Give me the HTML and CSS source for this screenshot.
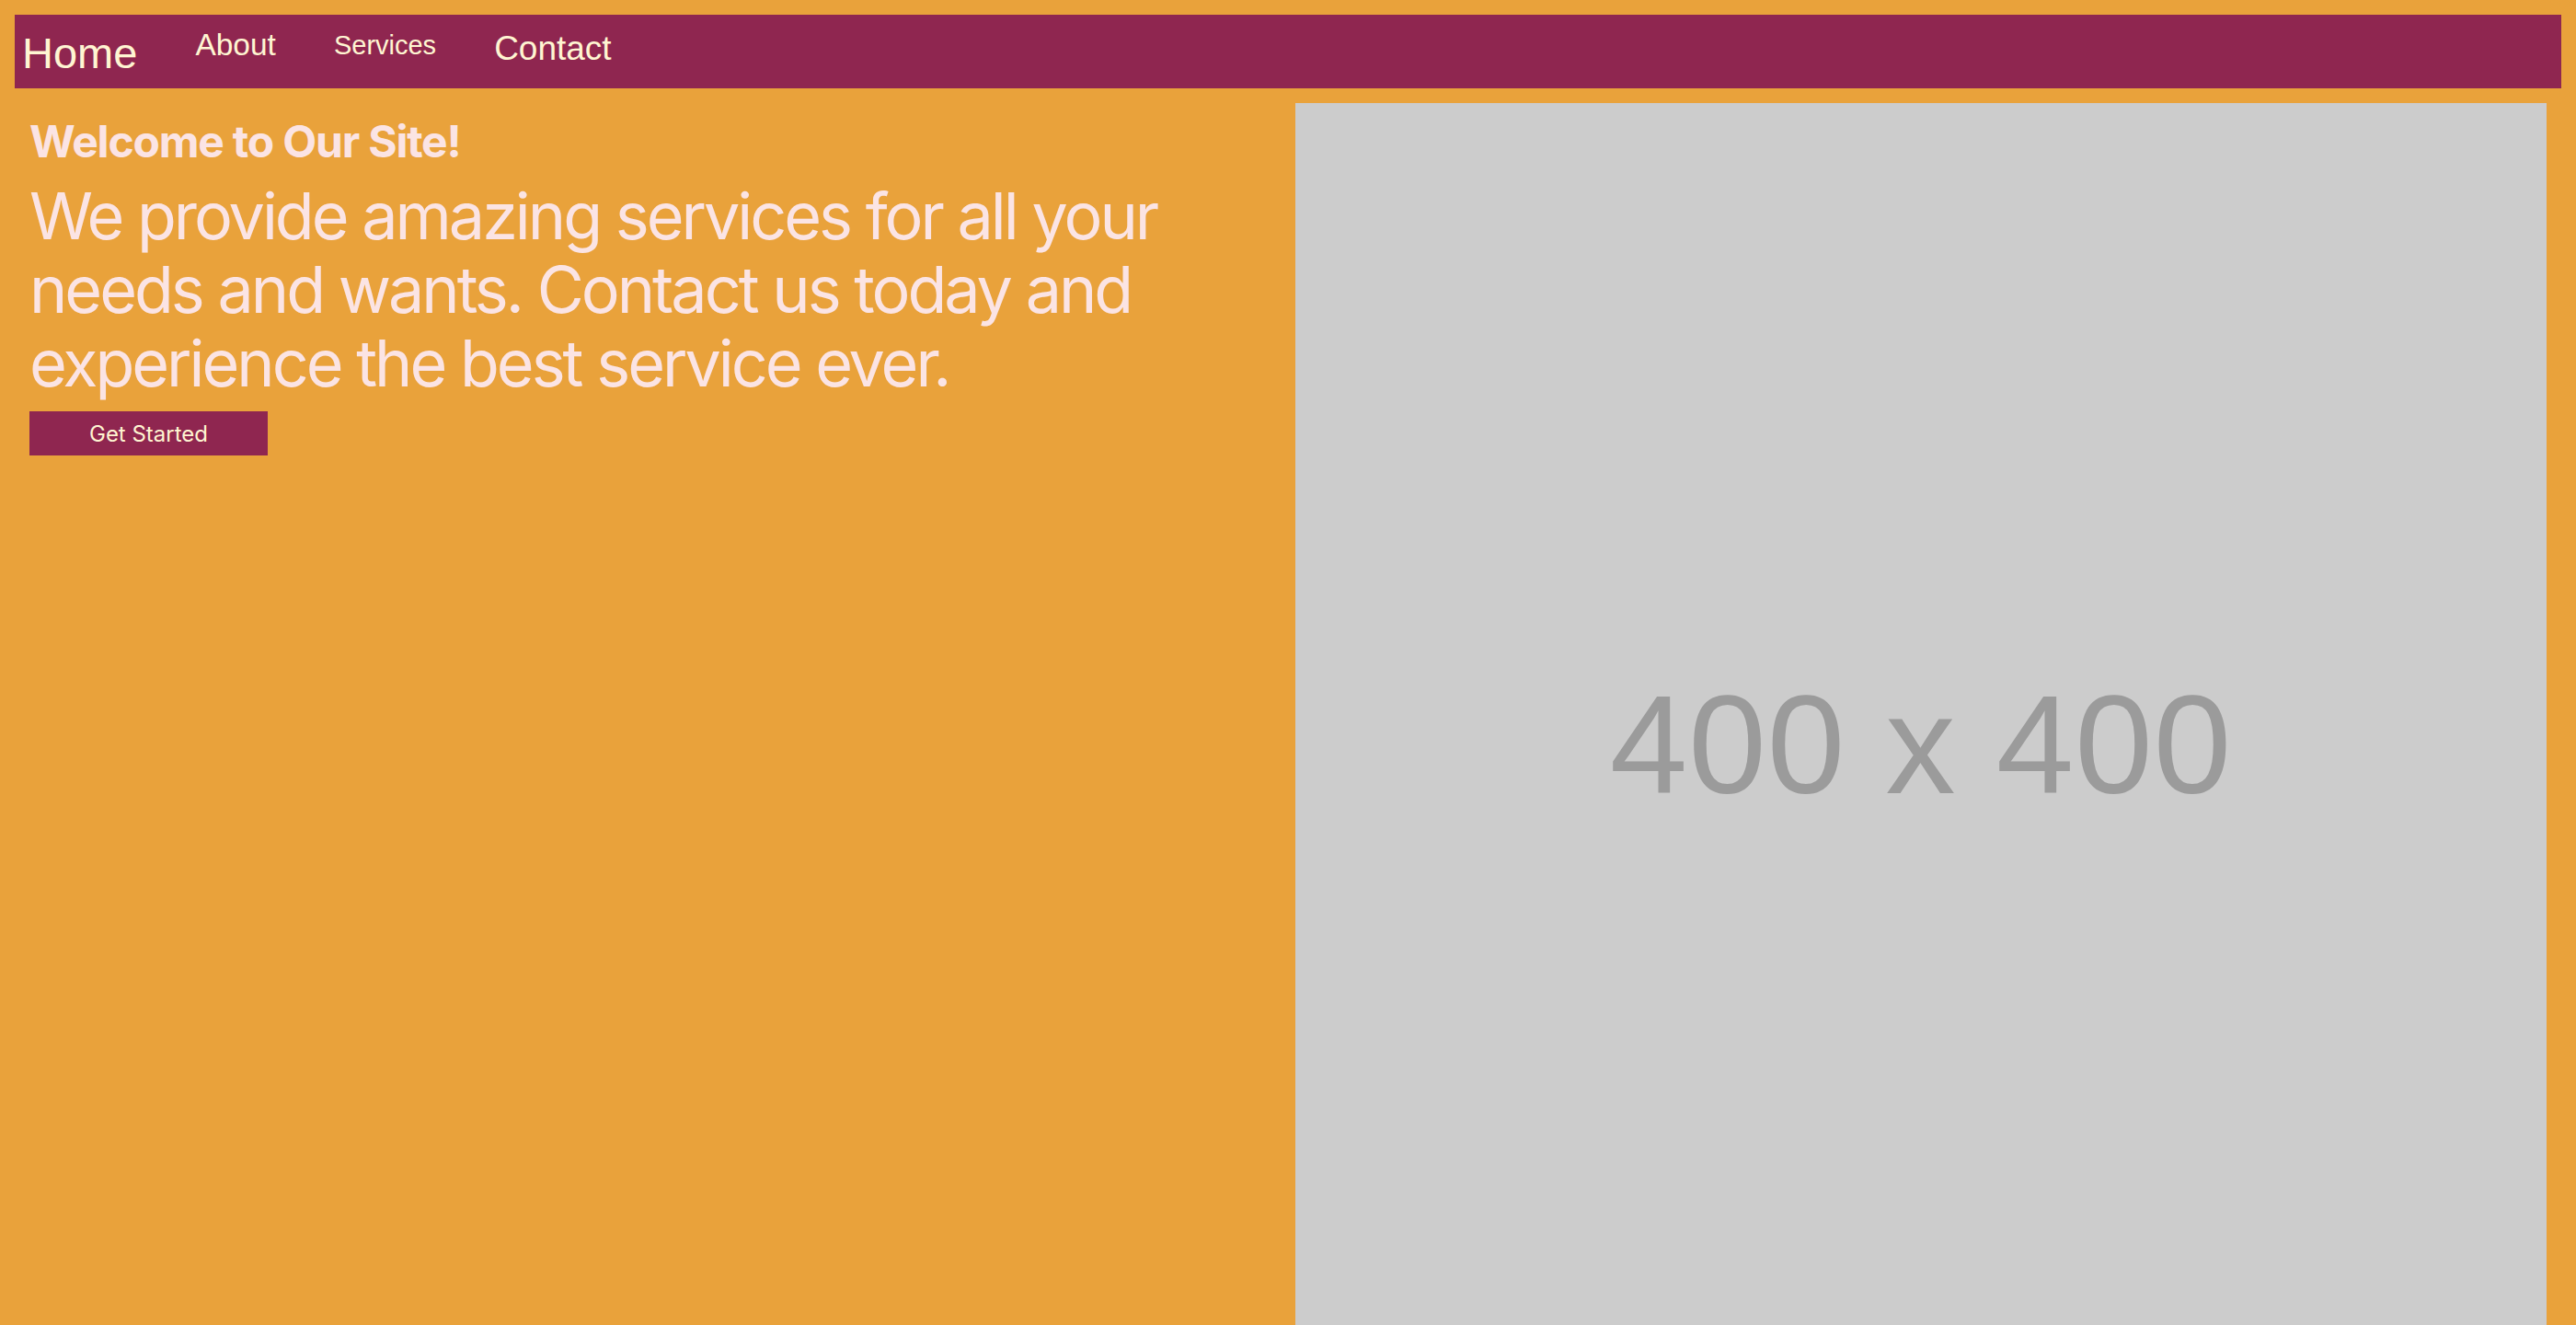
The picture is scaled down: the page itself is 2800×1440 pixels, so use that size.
FILE: index.html
```html
<!DOCTYPE html>
<html lang="en">
<head>
<meta charset="utf-8">
<title>Welcome to Our Site!</title>
<link rel="stylesheet" href="styles.css">
</head>
<body>
  <nav class="nav">
    <a class="nav-link nav-home" href="#">Home</a>
    <a class="nav-link nav-about" href="#">About</a>
    <a class="nav-link nav-services" href="#">Services</a>
    <a class="nav-link nav-contact" href="#">Contact</a>
  </nav>
  <main class="hero">
    <section class="hero-text">
      <h1 class="hero-title">Welcome to Our Site!</h1>
      <p class="hero-lead">We provide amazing services for all your needs and wants. Contact us today and experience the best service ever.</p>
      <button class="hero-button" type="button">Get Started</button>
    </section>
    <section class="hero-media">
      <div class="placeholder"><span class="placeholder-label">400 x 400</span></div>
    </section>
  </main>
</body>
</html>
```

FILE: styles.css
```css
html, body {
  background: #e9a23b;
}
body {
  margin: 0;
  padding: 16px 16px 0;
  font-family: "Inter", "Liberation Sans", sans-serif;
  overflow: hidden;
}

.nav {
  display: flex;
  align-items: flex-start;
  gap: 63px;
  height: 80px;
  padding-left: 8px;
  background: #8f2650;
  box-sizing: border-box;
}
.nav-link {
  font-family: "Liberation Sans", Arial, sans-serif;
  color: #fff5d2;
  text-decoration: none;
  line-height: 1;
}
.nav-home { font-size: 47px; margin-top: 18px; }
.nav-about { font-size: 33.5px; margin-top: 16px; }
.nav-services { font-size: 29px; margin-top: 19px; }
.nav-contact { font-size: 37px; margin-top: 18px; }

.hero {
  display: grid;
  grid-template-columns: 1fr 1fr;
  gap: 16px;
  padding: 16px;
}

.hero-text {
  display: flex;
  flex-direction: column;
  align-items: flex-start;
}
.hero-title {
  margin: 12px 0 0;
  font-size: 48px;
  font-weight: 700;
  color: #fbe4e4;
  letter-spacing: -1.2px;
}
.hero-lead {
  margin: 12px 0 0;
  font-size: 70px;
  line-height: 80px;
  color: #fbe4e4;
  letter-spacing: -3px;
}
.hero-button {
  margin-top: 12px;
  width: 259px;
  height: 48px;
  border: 0;
  padding: 0;
  background: #8f2650;
  color: #fff5d2;
  font-family: "Inter", sans-serif;
  font-size: 24px;
}

.placeholder {
  width: 100%;
  aspect-ratio: 1 / 1;
  background: #cccccc;
  display: flex;
  align-items: center;
  justify-content: center;
  padding-top: 34px;
  box-sizing: border-box;
}
.placeholder-label {
  font-family: "Liberation Sans", Arial, sans-serif;
  font-size: 152px;
  letter-spacing: 1px;
  color: #9b9b9b;
  filter: blur(0.6px);
}
```
